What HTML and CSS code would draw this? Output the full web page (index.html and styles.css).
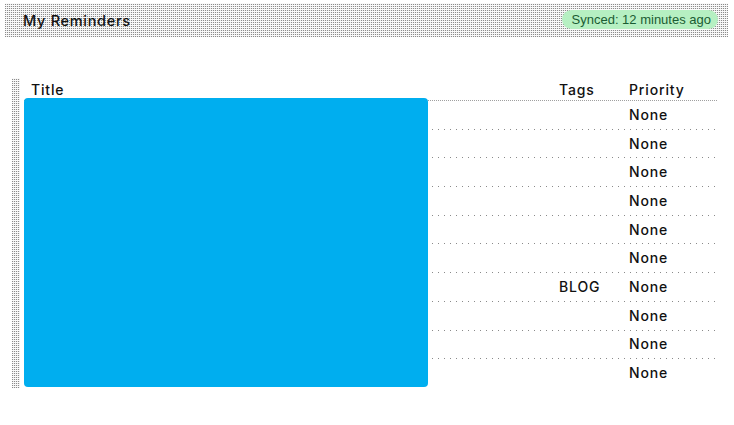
FILE: index.html
```html
<!DOCTYPE html>
<html lang="en">
<head>
<meta charset="utf-8">
<title>My Reminders</title>
<link rel="stylesheet" href="styles.css">
</head>
<body>
<header class="topbar">
  <h1 class="title">My Reminders</h1>
  <span class="sync">Synced: 12 minutes ago</span>
</header>
<section class="list">
  <div class="rail"></div>
  <div class="table">
    <div class="row head">
      <div class="cell">Title</div>
      <div class="cell">Tags</div>
      <div class="cell">Priority</div>
    </div>
    <div class="row"><div class="cell"></div><div class="cell"></div><div class="cell">None</div></div>
    <div class="row"><div class="cell"></div><div class="cell"></div><div class="cell">None</div></div>
    <div class="row"><div class="cell"></div><div class="cell"></div><div class="cell">None</div></div>
    <div class="row"><div class="cell"></div><div class="cell"></div><div class="cell">None</div></div>
    <div class="row"><div class="cell"></div><div class="cell"></div><div class="cell">None</div></div>
    <div class="row"><div class="cell"></div><div class="cell"></div><div class="cell">None</div></div>
    <div class="row"><div class="cell"></div><div class="cell">BLOG</div><div class="cell">None</div></div>
    <div class="row"><div class="cell"></div><div class="cell"></div><div class="cell">None</div></div>
    <div class="row"><div class="cell"></div><div class="cell"></div><div class="cell">None</div></div>
    <div class="row last"><div class="cell"></div><div class="cell"></div><div class="cell">None</div></div>
    <div class="cover"></div>
  </div>
</section>
</body>
</html>
```
FILE: styles.css
```css
html, body {
  margin: 0;
  background: #fff;
  font-family: Inter, "Noto Sans", sans-serif;
  color: #111;
}

.topbar,
.rail {
  background-color: #ececec;
  background-image:
    linear-gradient(to bottom, #fafafa 1px, transparent 1px),
    linear-gradient(to right, #8c8c8c 1px, transparent 1px);
  background-size: 2px 2px, 2px 2px;
}

.topbar {
  margin: 3px 6px 0 5px;
  height: 34px;
  box-sizing: border-box;
  padding: 0 10px 0 18px;
  display: flex;
  align-items: center;
  justify-content: space-between;
}

.title {
  margin: 0;
  font-size: 14.5px;
  font-weight: 500;
  letter-spacing: 0.7px;
  color: #111;
}

.sync {
  height: 19px;
  line-height: 19px;
  padding: 0 7px 0 10px;
  border-radius: 10px;
  background: #b6f0c2;
  color: #1a5c32;
  font-family: "Liberation Sans", Arial, sans-serif;
  font-size: 13px;
  margin-top: -2px;
}

.list {
  margin: 41px 0 0 12px;
  display: flex;
  gap: 4px;
}

.rail {
  width: 8px;
}

.table {
  position: relative;
  width: 694px;
}

.row {
  display: grid;
  grid-template-columns: 528px 70px 96px;
  height: 28.7px;
  align-items: center;
  font-size: 14px;
  font-weight: 500;
  background: repeating-linear-gradient(to right, #8a8a8a 0 1px, transparent 1px 6px) left bottom / 100% 1px no-repeat;
}

.row .cell {
  margin-top: -2px;
}

.row.head {
  height: 23px;
  align-items: end;
  padding-bottom: 1px;
  box-sizing: border-box;
  background: repeating-linear-gradient(to right, #a0a0a0 0 1px, transparent 1px 2px) left bottom / 100% 1px no-repeat;
}

.row.head .cell {
  line-height: 20px;
  margin-top: 0;
}

.row.last {
  background: none;
}

.cell {
  padding-left: 7px;
  letter-spacing: 0.85px;
}

.cover {
  position: absolute;
  left: 0;
  top: 20px;
  width: 404px;
  height: 289px;
  border-radius: 4px;
  background: #00aeef;
}
```
